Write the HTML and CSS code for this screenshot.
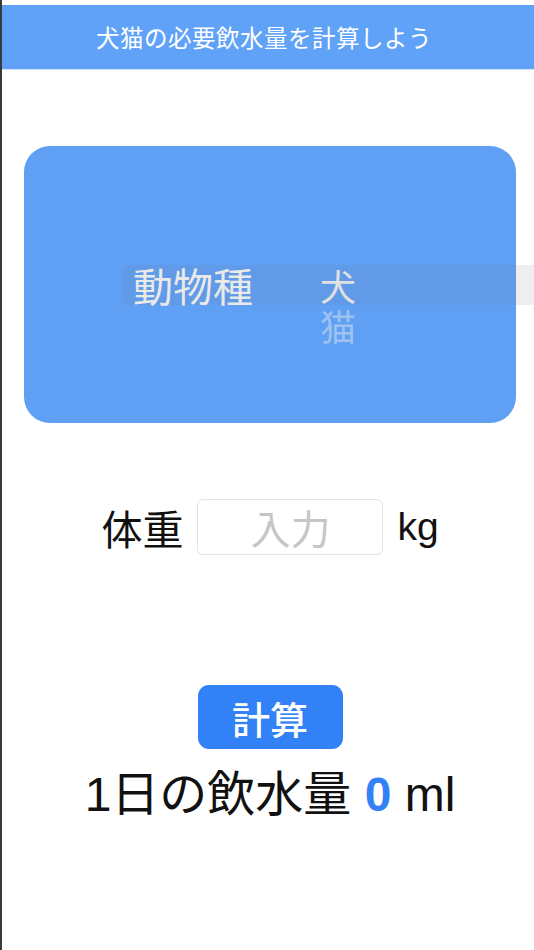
FILE: index.html
```html
<!DOCTYPE html>
<html lang="ja">
<head>
<meta charset="utf-8">
<title>犬猫の必要飲水量を計算しよう</title>
<link rel="stylesheet" href="styles.css">
</head>
<body>
  <header class="topbar">
    <h1 class="topbar-title">犬猫の必要飲水量を計算しよう</h1>
  </header>
  <main class="content">
    <section class="card">
      <div class="picker">
        <span class="picker-label">動物種</span>
        <div class="wheel">
          <span class="wheel-item is-selected">犬</span>
          <span class="wheel-item is-faded">猫</span>
        </div>
      </div>
    </section>
    <div class="weight-row">
      <span class="weight-label">体重</span>
      <input class="weight-input" type="text" placeholder="入力">
      <span class="weight-unit">kg</span>
    </div>
    <div class="action">
      <button class="calc-button" type="button">計算</button>
    </div>
    <p class="result">1日の飲水量 <span class="result-value">0</span> ml</p>
  </main>
</body>
</html>
```

FILE: styles.css
```css
html {
  overflow: hidden;
}

body {
  margin: 0;
  min-height: 950px;
  box-sizing: border-box;
  border-left: 2px solid #3a3a3a;
  background: #ffffff;
  font-family: "Liberation Sans", "Noto Sans CJK JP", sans-serif;
  color: #111111;
  overflow: hidden;
}

.topbar {
  margin-top: 5px;
  height: 64px;
  background: #60a2f7;
  border-bottom: 1px solid #d3e4fc;
  display: flex;
  align-items: center;
  justify-content: center;
  padding-right: 8px;
}

.topbar-title {
  margin: 0;
  font-size: 23.5px;
  font-weight: normal;
  color: #ffffff;
  font-family: "Noto Sans CJK JP", sans-serif;
  letter-spacing: 0.5px;
}

.content {
  padding: 0 18px 0 22px;
  display: flex;
  flex-direction: column;
}

.card {
  margin-top: 76px;
  height: 277px;
  border-radius: 26px;
  background: #5fa0f5;
  display: flex;
  align-items: center;
  padding-left: 98px;
}

.picker {
  position: relative;
  display: flex;
  align-items: flex-start;
  height: 40px;
  padding-left: 11px;
  font-family: "Noto Sans CJK JP", sans-serif;
  font-size: 40px;
  line-height: 40px;
}

.picker::before {
  content: "";
  position: absolute;
  left: 0;
  top: 0;
  width: 412px;
  height: 40px;
  border-radius: 8px 0 0 8px;
  background: rgba(118, 118, 128, 0.12);
}

.picker-label {
  position: relative;
  width: 187px;
  color: #e9e9e9;
}

.wheel {
  position: relative;
  display: flex;
  flex-direction: column;
}

.wheel-item {
  display: block;
  flex-shrink: 0;
  height: 40px;
  font-size: 36px;
  line-height: 40px;
}

.is-selected {
  color: #e0e0e0;
}

.is-faded {
  color: rgba(220, 228, 240, 0.5);
}

.weight-row {
  margin-top: 76px;
  display: flex;
  align-items: center;
  justify-content: center;
  gap: 14px;
  height: 56px;
}

.weight-label {
  font-family: "Noto Sans CJK JP", sans-serif;
  font-size: 41px;
  line-height: 56px;
}

.weight-input {
  box-sizing: border-box;
  width: 186px;
  height: 56px;
  border: 1px solid #e2e2e2;
  border-radius: 6px;
  background: #ffffff;
  text-align: center;
  font-family: "Noto Sans CJK JP", sans-serif;
  font-size: 40px;
  padding: 0;
  outline: none;
}

.weight-input::placeholder {
  color: #c6c6c6;
}

.weight-unit {
  font-size: 39px;
  line-height: 56px;
}

.action {
  margin-top: 130px;
  display: flex;
  justify-content: center;
}

.calc-button {
  width: 145px;
  height: 64px;
  border: none;
  border-radius: 11px;
  background: #3381f6;
  color: #ffffff;
  font-family: "Noto Sans CJK JP", sans-serif;
  font-size: 38px;
  font-weight: 500;
  padding: 0;
}

.result {
  margin: 18px 0 0;
  text-align: center;
  font-size: 48px;
  line-height: 56px;
}

.result-value {
  color: #3381f6;
  font-weight: bold;
}
```
